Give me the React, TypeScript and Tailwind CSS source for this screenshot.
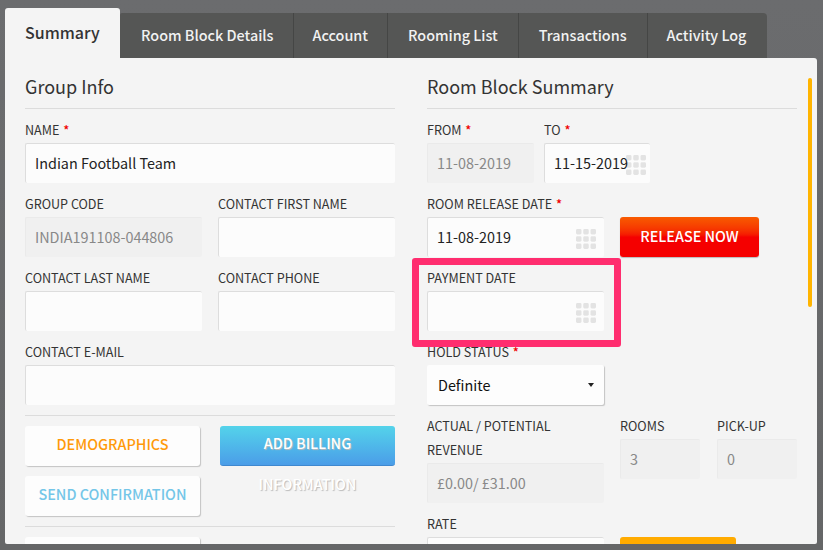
import React from "react";

const Star = () => <span className="ml-[1px] font-medium text-[#f00000]"> *</span>;

function Label({ text, req }: { text: string; req?: boolean }) {
  return (
    <div className="h-[26px] leading-[26px] text-[12.6px] text-[#333] whitespace-nowrap">
      {text}
      {req && <Star />}
    </div>
  );
}

function GridIcon({ narrow }: { narrow?: boolean }) {
  const cells = [0, 7.25, 14.5];
  return (
    <svg width="20" height="20" viewBox="0 0 20 20" className={`absolute top-[12px] ${narrow ? "right-[4px]" : "right-[8px]"}`}>
      {cells.map((y) =>
        cells.map((x) => <rect key={`${x}-${y}`} x={x} y={y} width="5.5" height="5.5" rx="1.4" fill="#e3e3e3" />)
      )}
    </svg>
  );
}

function Input({ value = "", disabled, icon, narrow }: { value?: string; disabled?: boolean; icon?: boolean; narrow?: boolean }) {
  return (
    <div className={`relative h-10 w-full rounded-[2px] ${disabled ? "bg-[#f0f0f0]" : "bg-[#fcfcfc]"}`}>
      {icon && <GridIcon narrow={narrow} />}
      <input
        readOnly
        value={value}
        className={`relative block h-10 w-full pl-[9px] pr-0 pb-[2px] bg-transparent text-[14.4px] border-t border-l outline-none rounded-[2px] ${
          disabled ? "text-[#888888] border-[#eaeaea]" : "text-[#222222] border-[#dddddd]"
        }`}
      />
    </div>
  );
}

function Field({ label, req, value, disabled, icon, narrow, className }: { label: string; req?: boolean; value?: string; disabled?: boolean; icon?: boolean; narrow?: boolean; className?: string }) {
  return (
    <div className={`mb-2 ${className ?? ""}`}>
      <Label text={label} req={req} />
      <Input value={value} disabled={disabled} icon={icon} narrow={narrow} />
    </div>
  );
}

function WhiteButton({ text, color }: { text: string; color: string }) {
  return (
    <button className={`block h-10 w-[175px] bg-[#fdfdfd] rounded-[3px] text-[14.4px] font-medium shadow-[1px_1px_1px_#c4c4c4] ${color}`}>
      <span className="block -mt-[4px]">{text}</span>
    </button>
  );
}

const tabs = [
  { t: "Room Block Details", c: "pl-[21px] pr-[19px] border-r border-[#454645]" },
  { t: "Account", c: "pl-[19px] pr-[19px] border-r border-[#454645]" },
  { t: "Rooming List", c: "pl-5 pr-5 border-r border-[#454645]" },
  { t: "Transactions", c: "pl-5 pr-5 border-r border-[#454645]" },
  { t: "Activity Log", c: "pl-[19px] pr-[21px]" },
];

export default function App() {
  return (
    <div className="h-[550px] w-[823px] overflow-hidden bg-gradient-to-b from-[#6b6c6e] to-[#656667] pt-2 pl-[5px] font-['Noto_Sans_CJK_SC','Liberation_Sans',sans-serif]">
      <div className="flex items-end h-[50px]">
        <div className="h-[50px] w-[115px] bg-[#f4f4f4] rounded-t-[3px] pl-5 pt-[11px] text-[16px] leading-[26px] font-medium text-[#333]">
          Summary
        </div>
        <div className="flex h-[45px] bg-[#555655] rounded-tr-[4px] rounded-tl-[2px]">
          {tabs.map(({ t, c }) => (
            <div key={t} className={`h-[45px] pt-[9px] text-[14.4px] leading-[26px] font-medium text-[#f2f2f2] whitespace-nowrap ${c}`}>
              {t}
            </div>
          ))}
        </div>
      </div>

      <div className="relative h-[486px] w-[812px] overflow-hidden bg-[#f4f4f4] rounded-tr-[3px] rounded-b-[2px] px-5 pt-3">
        <div className="flex gap-8">
          <div className="w-[370px] shrink-0">
            <div className="h-[39px] border-b border-[#dcdcdc] text-[18px] leading-[32px] text-[#333] mb-2">Group Info</div>
            <Field label="NAME" req value="Indian Football Team" />
            <div className="grid grid-cols-2 gap-x-4">
              <Field label="GROUP CODE" value="INDIA191108-044806" disabled />
              <Field label="CONTACT FIRST NAME" />
              <Field label="CONTACT LAST NAME" />
              <Field label="CONTACT PHONE" />
            </div>
            <Field label="CONTACT E-MAIL" />
            <div className="mt-[10px] border-t border-[#dcdcdc] pt-[10px] flex gap-5">
              <div className="flex flex-col gap-[10px]">
                <WhiteButton text="DEMOGRAPHICS" color="text-[#ff9a0a]" />
                <WhiteButton text="SEND CONFIRMATION" color="text-[#74c6e8]" />
              </div>
              <button className="block self-start h-10 w-[175px] rounded-[3px] bg-gradient-to-b from-[#54d3ea] to-[#4b9de8] border-b border-[#3f88cf] text-[14.4px] leading-[41px] font-medium text-white [text-shadow:1px_1px_1px_#bbbbbb]">
                <span className="block -mt-[4px]">ADD BILLING INFORMATION</span>
              </button>
            </div>
            <div className="mt-[10px] border-t border-[#dcdcdc] pt-[10px]">
              <WhiteButton text="" color="" />
            </div>
          </div>

          <div className="w-[370px] shrink-0">
            <div className="h-[39px] border-b border-[#dcdcdc] text-[18px] leading-[32px] text-[#333] mb-2">Room Block Summary</div>
            <div className="flex gap-[10px]">
              <Field label="FROM" req value="11-08-2019" disabled className="w-[107px]" />
              <Field label="TO" req value="11-15-2019" icon narrow className="w-[106px]" />
            </div>
            <div className="flex gap-4">
              <Field label="ROOM RELEASE DATE" req value="11-08-2019" icon className="w-[177px]" />
              <button className="mt-[26px] h-10 w-[139px] rounded-[3px] bg-gradient-to-b from-[#f85a00] to-[#f50000] via-[#f50000] text-[14.4px] font-medium text-white shadow-[0_1px_1px_#bbbbbb]">
                <span className="block -mt-[2px]">RELEASE NOW</span>
              </button>
            </div>
            <Field label="PAYMENT DATE" icon className="w-[177px]" />
            <div className="mb-2 w-[177px]">
              <Label text="HOLD STATUS" req />
              <div className="flex h-10 items-center justify-between bg-[#fdfdfd] rounded-[2px] pl-[11px] pr-[10px] pb-[1px] text-[14.4px] text-[#111] shadow-[1px_1px_1px_#c4c4c4]">
                Definite
                <svg width="6" height="4" viewBox="0 0 6 4">
                  <path d="M0 0H6L3 4Z" fill="#222" />
                </svg>
              </div>
            </div>
            <div className="flex gap-4">
              <div className="w-[177px] shrink-0">
                <div className="h-[24px] leading-[26px] text-[12.6px] text-[#333]">ACTUAL / POTENTIAL</div>
                <Label text="REVENUE" />
                <Input value="£0.00/ £31.00" disabled />
                <div className="h-2" />
              </div>
              <div className="w-[80px]">
                <Label text="ROOMS" />
                <Input value="3" disabled />
              </div>
              <div className="w-[80px] ml-[1px]">
                <Label text="PICK-UP" />
                <Input value="0" disabled />
              </div>
            </div>
            <div className="flex gap-4">
              <Field label="RATE" className="w-[177px]" />
              <div className="mt-[26px] h-10 w-[116px] rounded-[3px] bg-[#ffab00]" />
            </div>
          </div>
        </div>

        <div className="absolute left-[803px] top-[20px] h-[229px] w-[4px] rounded-[2px] bg-[#ffb400]" />
        <div className="absolute left-[407px] top-[200px] h-[89px] w-[209px] rounded-[3px] border-[7px] border-[#ff2d6f]" />
      </div>
    </div>
  );
}
